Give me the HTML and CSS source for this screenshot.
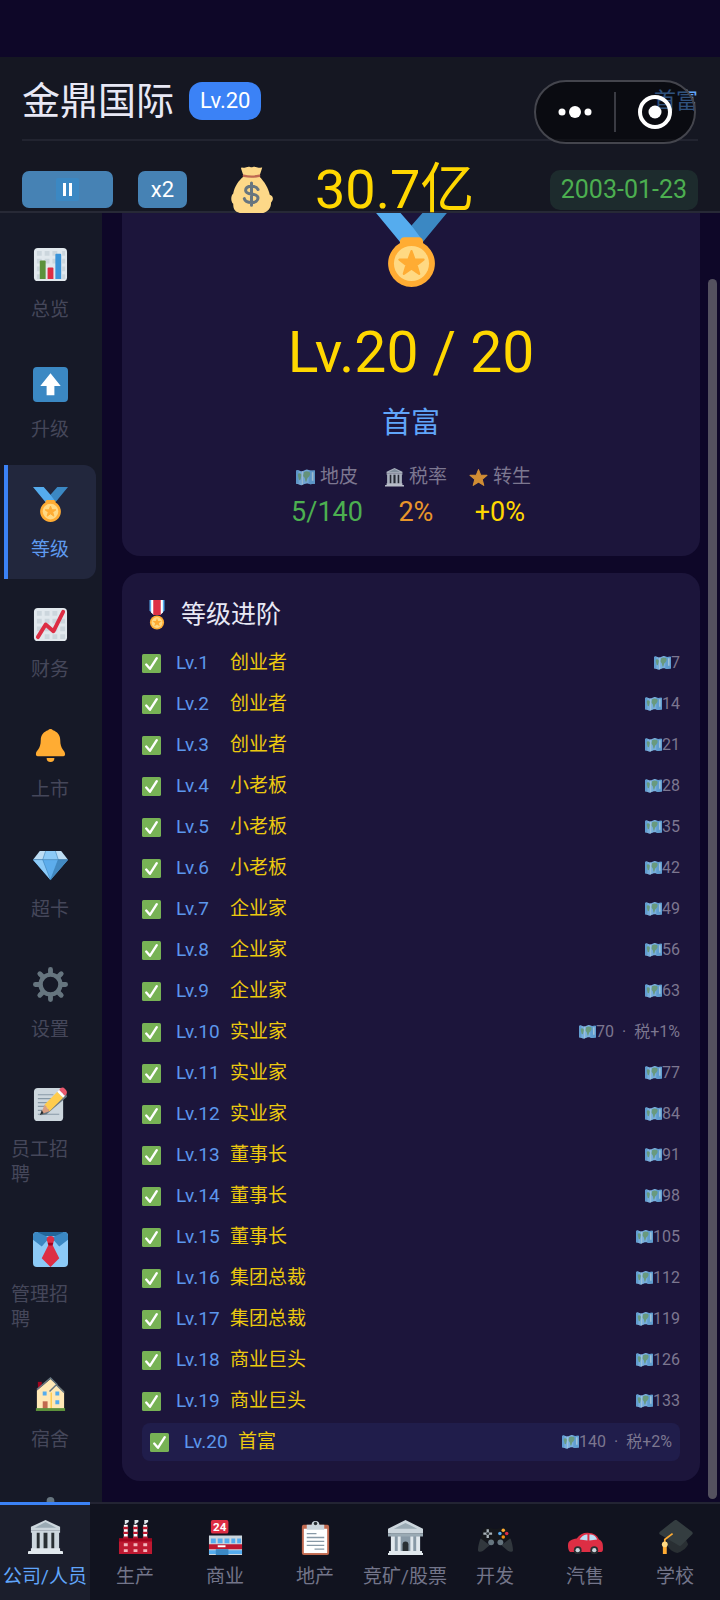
FILE: index.html
```html
<!doctype html>
<html lang="zh-CN">
<head>
    <meta charset="UTF-8">
    <meta name="viewport" content="width=device-width, initial-scale=1.0">
    <title>金鼎国际</title>
    <link rel="stylesheet" href="styles.css">
</head>
<body>

<!-- icons -->
<svg class="sprite" aria-hidden="true">
    <symbol id="medal" viewBox="0 0 36 36">
        <path fill="#55acee" d="M18 8l-7-8H0l14 17 11.5-4.75z"/>
        <path fill="#3b88c3" d="M25 0l-7 8 5.4 7.3 1.2-1.5L36 0z"/>
        <path fill="#ffac33" d="M23.2 16c.1-.2.1-.4.1-.7a2 2 0 0 0-2-2h-6.6a2 2 0 0 0-2 2c0 .3 0 .5.1.7a10.67 10.67 0 1 0 10.4 0z"/>
        <circle fill="#ffd983" cx="18" cy="25.3" r="8"/>
        <path fill="#ffac33" stroke="#ffac33" stroke-linejoin="round" d="M18 19.6l1.4 3.9h4.1l-3.2 2.5 1.2 4L18 27.6 14.5 30l1.2-4-3.2-2.5h4.1z"/>
    </symbol>
    <symbol id="medal2" viewBox="0 0 36 36">
        <path fill="#55acee" d="M9 0h18v13l-5 4h-8l-5-4z"/>
        <path fill="#fff" d="M11 0h14v15l-3 3h-8l-3-3z"/>
        <path fill="#dd2e44" d="M13.500 0h9v18h-9z"/>
        <circle fill="#ffac33" cx="18" cy="27" r="8.500"/>
        <circle fill="#ffd983" cx="18" cy="27" r="6.500"/>
        <path fill="#ffac33" d="M18 21.500l1.400 3.800h4l-3.200 2.500 1.200 4L18 29.500l-3.400 2.300 1.200-4-3.200-2.500h4z"/>
    </symbol>
    <symbol id="bars" viewBox="0 0 36 36">
        <rect fill="#e1e8ed" x="1" y="1" width="34" height="34" rx="4"/>
        <path fill="#ccd6dd" d="M4 4h5v5H4zm8 0h5v5h-5zm8 0h5v5h-5zM4 12h5v5H4zm8 0h5v5h-5zm8 0h5v5h-5zM4 20h3v5H4zm26 0h3v5h-3zM30 12h3v5h-3zM30 4h3v5h-3zM4 28h3v5H4zm26 0h3v5h-3z"/>
        <path fill="#5c913b" d="M7 15a1 1 0 0 1 1-1h4a1 1 0 0 1 1 1v18H7z"/>
        <path fill="#dd2e44" d="M15 22a1 1 0 0 1 1-1h4a1 1 0 0 1 1 1v11h-6z"/>
        <path fill="#3b94d9" d="M23 8a1 1 0 0 1 1-1h4a1 1 0 0 1 1 1v25h-6z"/>
    </symbol>
    <symbol id="up" viewBox="0 0 36 36">
        <rect fill="#3b88c3" width="36" height="36" rx="4"/>
        <path fill="#fff" d="M18 6.500L28.500 19.500H22V29h-8v-9.500H7.500z"/>
    </symbol>
    <symbol id="chart" viewBox="0 0 36 36">
        <rect fill="#e1e8ed" x="1" y="1" width="34" height="34" rx="4"/>
        <path fill="#ccd6dd" d="M4 4h5v5H4zm8 0h5v5h-5zm8 0h5v5h-5zM4 12h5v5H4zm8 0h5v5h-5zm8 0h5v5h-5zM4 20h5v5H4zm8 0h5v5h-5zm8 0h5v5h-5zm8 0h5v5h-5zM28 12h5v5h-5zM12 28h5v5h-5zm8 0h5v5h-5zm8 0h5v5h-5z"/>
        <path fill="none" stroke="#dd2e44" stroke-width="4" stroke-linecap="round" stroke-linejoin="round" d="M5 31l8-13 8 7L31 5"/>
    </symbol>
    <symbol id="bell" viewBox="0 0 36 36">
        <path fill="#ffac33" d="M28 13c0 11 5 10 5 15 0 0 0 2-2 2H5c-2 0-2-2-2-2 0-5 5-4 5-15C8 8.500 11.200 4.700 15.500 3.400a3 3 0 0 1 5 0C24.800 4.700 28 8.500 28 13z"/>
        <path fill="#ffac33" d="M14 32h8a4 4 0 0 1-8 0z"/>
    </symbol>
    <symbol id="gem" viewBox="0 0 36 36">
        <path fill="#bdddf4" d="M7 4h22l7 9H0z"/>
        <path fill="#8ccaf7" d="M13 4h10l3 9H10z"/>
        <path fill="#5dadec" d="M0 13h36L18 34z"/>
        <path fill="#8ccaf7" d="M0 13h10l8 21z"/>
        <path fill="#4289c1" d="M26 13h10L18 34z"/>
        <path fill="none" stroke="#3b7fb5" stroke-width=".6" d="M0 13h36M13 4l-3 9 8 21 8-21-3-9"/>
    </symbol>
    <symbol id="gear" viewBox="0 0 36 36">
        <g stroke="#66757f" stroke-width="5" stroke-linecap="round">
            <path d="M18 2.500v31M2.500 18h31M7 7l22 22M29 7L7 29"/>
        </g>
        <circle fill="#161927" stroke="#66757f" stroke-width="4.500" cx="18" cy="18" r="10.200"/>
    </symbol>
    <symbol id="memo" viewBox="0 0 36 36">
        <rect fill="#ccd6dd" x="1" y="1" width="30" height="34" rx="4"/>
        <path stroke="#8899a6" stroke-width="1.200" d="M5 8h16M5 12h16M5 16h14M5 20h12M5 24h10M5 28h22"/>
        <path fill="#66757f" d="M8 29l26-23 1 4-21 18z"/>
        <path fill="#ffcc4d" d="M12 18L25 5l6 6-14 14z"/>
        <path fill="#fff" d="M25 5l2-2 6 6-2 2z"/>
        <path fill="#ea596e" d="M27 3c2-3 4-3 6-1s3 4 0 7z"/>
        <path fill="#d99e82" d="M12 18l5 7-9 3z"/>
        <path fill="#292f33" d="M9 24l2 3-4 2z"/>
    </symbol>
    <symbol id="tie" viewBox="0 0 36 36">
        <rect fill="#8ccaf7" width="36" height="36" rx="4"/>
        <path fill="#226699" d="M4 0h28l-5 4H9z"/>
        <path fill="#3b88c3" d="M0 4c0-3 2-4 4-4l13 6-8 9-9-7zM36 4c0-3-2-4-4-4L19 6l8 9 9-7z"/>
        <path fill="#dd2e44" d="M18 4c3 0 4 2 4 4l-2 5 7 14-9 9-9-9 7-14-2-5c0-2 1-4 4-4z"/>
        <path fill="#a0041e" d="M15 11h6l-1 3h-4z"/>
    </symbol>
    <symbol id="house" viewBox="0 0 36 36">
        <path fill="#a0041e" d="M5 5h4v9H5z"/>
        <path fill="#ffe8b6" d="M4 14L18 2l9 8 5 5v18H4z"/>
        <path fill="none" stroke="#66757f" stroke-width="1.500" d="M4 13L18 1l7 7M17 15l7-7 8 8"/>
        <path fill="#ffcc4d" d="M18 16h1.500v17H18z"/>
        <path fill="#55acee" d="M10 15h4v4h-4zm13 0h4v4h-4zm0 9h4v4h-4z"/>
        <path fill="#c1694f" d="M10 25h5v8h-5z"/>
        <path fill="#5c913b" d="M3 32h30v3H3z"/>
    </symbol>
    <symbol id="person" viewBox="0 0 36 36">
        <circle fill="#66757f" cx="18" cy="4" r="4"/>
        <path fill="#66757f" d="M6 34c0-14 4-20 12-20s12 6 12 20z"/>
    </symbol>
    <symbol id="temple" viewBox="0 0 36 36">
        <path fill="#ccd6dd" d="M18 0l15 7v4H3V7z"/>
        <path fill="#9aaab4" d="M18 2l11 6H7z"/>
        <path fill="#292f33" d="M5 12h26v18H5z"/>
        <path fill="#ccd6dd" d="M3 11h30v2H3zM4 12h5v18H4zm8 0h4v18h-4zm8 0h4v18h-4zm7 0h5v18h-5z"/>
        <path fill="#e1e8ed" d="M3 29h30v3H3zM1 32h34a1 1 0 0 1 1 1v2H0v-2a1 1 0 0 1 1-1z"/>
    </symbol>
    <symbol id="factory" viewBox="0 0 36 36">
        <path stroke="#fff" stroke-width="4" d="M8 5v14M18 5v14M28 5v14"/>
        <path stroke="#be1931" stroke-width="5" stroke-dasharray="2.500" d="M8 7v13M18 7v13M28 7v13"/>
        <path fill="#e1e8ed" d="M7 0h4v2L8 4H7zm10 0h4v2l-3 2h-1zm10 0h4v2l-3 2h-1z"/>
        <path fill="#be1931" d="M1 19h34v16H1z"/>
        <path fill="#a0041e" d="M1 19h34v3H1z"/>
        <path fill="#f4b6bd" d="M6 24h4v3H6zm10 0h4v3h-4zm10 0h4v3h-4zM6 30h4v3H6zm10 0h4v3h-4zm10 0h4v3h-4z"/>
    </symbol>
    <symbol id="board" viewBox="0 0 36 36">
        <rect fill="#c1694f" x="4" y="5" width="28" height="31" rx="2"/>
        <path fill="#fff" d="M6 9h24v25H6z"/>
        <path fill="#ccd6dd" d="M9 5h5a4 4 0 0 1 8 0h5v5H9z"/>
        <circle fill="#292f33" cx="18" cy="3.500" r="1.800"/>
        <path stroke="#8899a6" stroke-width="1.300" d="M9 14h10M9 18h18M9 22h18M9 26h18M17 30h10"/>
    </symbol>
    <symbol id="bank" viewBox="0 0 36 36">
        <path fill="#8899a6" d="M3 14h30v18H3z"/>
        <path fill="#ccd6dd" d="M18 0l18 9v5H0V9z"/>
        <path fill="#9aaab4" d="M18 3l12 6H6zM0 14h36v3H0z"/>
        <path fill="#e1e8ed" d="M3 17h4v16H3zm7 0h3v16h-3zm13 0h3v16h-3zm6 0h4v16h-4z"/>
        <path fill="#292f33" d="M15 32v-7a3 3 0 0 1 6 0v7z"/>
        <path fill="#e1e8ed" d="M1 32h34v2h1v2H0v-2h1z"/>
    </symbol>
    <symbol id="pad" viewBox="0 0 36 36">
        <path fill="#15171c" d="M5 10c5-4 9-1 13-1s8-3 13 1l3 12H2z"/>
        <path fill="#31373d" d="M3 19l9 7-7 6c-2 1-5 1-5-1 0-4 2-12 3-12zM33 19l-9 7 7 6c2 1 5 1 5-1 0-4-2-12-3-12z"/>
        <path stroke="#aab4ba" stroke-width="2.400" d="M10 9.500v9M5.500 14h9"/>
        <circle fill="#292f33" cx="10" cy="14" r="1.500"/>
        <circle fill="#66757f" cx="13.500" cy="23" r="3"/>
        <circle fill="#66757f" cx="23" cy="23" r="3"/>
        <circle fill="#ffac33" cx="26" cy="10.500" r="1.800"/>
        <circle fill="#dd2e44" cx="29.500" cy="14" r="1.800"/>
        <circle fill="#55acee" cx="22.500" cy="14" r="1.800"/>
        <circle fill="#f4900c" cx="26" cy="17.500" r="1.800"/>
    </symbol>
    <symbol id="car" viewBox="0 0 36 36">
        <path fill="#dd2e44" d="M0 26c0-5 4-6 9-7 3-4 6-6 11-6 7 0 10 3 12 7 4 2 4 5 4 10 0 2-1 3-3 3H3c-2 0-3-3-3-7z"/>
        <path fill="#bdddf4" d="M12 20c3-4 5-5 8-5v6zM22 15c4 0 6 1 8 5l-8 1z"/>
        <circle fill="#292f33" cx="10" cy="31" r="4"/>
        <circle fill="#292f33" cx="27" cy="31" r="4"/>
        <circle fill="#ccd6dd" cx="10" cy="31" r="2.200"/>
        <circle fill="#ccd6dd" cx="27" cy="31" r="2.200"/>
    </symbol>
    <symbol id="cap" viewBox="0 0 36 36">
        <path fill="#292f33" d="M8 16l20 3 3 6c-2 5-8 8-11 9-4-1-8-3-10-7z"/>
        <path fill="#343d40" d="M19 0l16 12c1 1 1 2 0 3L24 26c-1 1-2 1-3 0L2 15c-1-1-1-2 0-3L16 1c1-1 2-1 3-1z"/>
        <path fill="none" stroke="#ffac33" stroke-width="1.800" d="M15 14l-8 6v6"/>
        <path fill="#ffac33" d="M5 25h4v10H5z"/>
        <circle fill="#ffd983" cx="7" cy="25" r="3"/>
    </symbol>
    <symbol id="bag" viewBox="0 0 36 36">
        <path fill="#fdd888" d="M10 2c0-2 2 0 4-1s3 0 4 0 2-1 4 0 5-1 4 1l-2 6c4 4 7 9 8 14 3 1 3 4 1 6 0 5-3 7-6 8H9c-4-1-5-3-5-7-2-2-2-6 0-8 1-5 4-10 8-13z"/>
        <path fill="#bf6952" d="M12 6.500c4 1 8 1 12 0 1 0 1 1.800 0 2-4 .7-8 .7-12 0-1-.2-1-2 0-2z"/>
        <path fill="none" stroke="#67757f" stroke-width="2.300" stroke-linecap="round" d="M18 13v17M23 18c-1-2-3-2.500-5-2.500-3 0-4.500 1.500-4.500 3.200C13.500 23 23 20 23 24.500c0 2-2 3.500-5 3.500s-5-1-5.500-3"/>
    </symbol>
    <symbol id="check" viewBox="0 0 36 36">
        <rect fill="#77b255" width="36" height="36" rx="3"/>
        <path fill="none" stroke="#fff" stroke-width="4.500" stroke-linecap="round" stroke-linejoin="round" d="M8 20l7 8L28 8"/>
    </symbol>
    <symbol id="map" viewBox="0 0 36 30">
        <path fill="#88c9f9" d="M0 2c6-3 8 2 12 1s8-5 12-2 8 0 12 1v25c-4-1-8 2-12 0s-8 0-12 2-8-3-12-2z"/>
        <path fill="#6db6ea" d="M0 2c3-1 3-1 5-.5V26c-2 0-3-.5-5 1zM24 1c4 2 8 0 12 1v25c-4-1-8 2-12 0z"/>
        <path fill="#77b28a" d="M15 5c4-3 8-2 11 0 2 3 0 7-2 9-4 2-3 9-5 9s-1-7-4-9 0-6 0-9zM5 7c3-1 6 1 5 5s-1 8-3 8-2-4-3-7 0-5 1-6z"/>
        <path fill="#bfe5f5" d="M11 3h2v25l-2 1zM30 5h3v16h-3z"/>
    </symbol>
    <symbol id="star" viewBox="0 0 36 36">
        <path fill="#ffac33" stroke="#ffac33" stroke-width="2" stroke-linejoin="round" d="M18 3l4.200 10.500L34 14l-9 7.500L28 33l-10-6.500L8 33l3-11.500L2 14l11.800-.5z"/>
    </symbol>
</svg>

<header class="header">
    <div class="title-row">
        <h1>金鼎国际</h1>
        <span class="badge">Lv.20</span>
        <span class="rank">首富</span>
    </div>
    <div class="status-row">
        <button class="btn pause" aria-label="暂停"><span class="pause-icon"></span></button>
        <button class="btn speed">x2</button>
        <div class="money">
            <svg class="bag"><use href="#bag"/></svg>
            <span>30.7亿</span>
        </div>
        <span class="date">2003-01-23</span>
    </div>
    <div class="capsule">
        <button aria-label="更多"><svg width="34" height="14"><circle cx="4" cy="7" r="3.500"/><circle cx="17" cy="7" r="6"/><circle cx="30" cy="7" r="3.500"/></svg></button>
        <button aria-label="关闭"><svg width="34" height="34"><circle class="ring" cx="17" cy="17" r="15"/><circle cx="17" cy="17" r="6.500"/></svg></button>
    </div>
</header>

<div class="content">
    <nav class="side">
        <a href="#"><svg><use href="#bars"/></svg><span>总览</span></a>
        <a href="#"><svg><use href="#up"/></svg><span>升级</span></a>
        <a href="#" class="active"><svg><use href="#medal"/></svg><span>等级</span></a>
        <a href="#"><svg><use href="#chart"/></svg><span>财务</span></a>
        <a href="#"><svg><use href="#bell"/></svg><span>上市</span></a>
        <a href="#"><svg><use href="#gem"/></svg><span>超卡</span></a>
        <a href="#"><svg><use href="#gear"/></svg><span>设置</span></a>
        <a href="#"><svg><use href="#memo"/></svg><span class="long">员工招聘</span></a>
        <a href="#"><svg><use href="#tie"/></svg><span class="long">管理招聘</span></a>
        <a href="#"><svg><use href="#house"/></svg><span>宿舍</span></a>
        <a href="#" aria-label="人员"><svg><use href="#person"/></svg></a>
    </nav>

    <main class="main">
        <section class="card hero">
            <svg class="hero-medal"><use href="#medal"/></svg>
            <div class="hero-level">Lv.20 / 20</div>
            <div class="hero-name">首富</div>
            <dl class="stats">
                <div><dt><svg><use href="#map"/></svg>地皮</dt><dd class="green">5/140</dd></div>
                <div><dt><svg><use href="#temple"/></svg>税率</dt><dd class="orange">2%</dd></div>
                <div><dt><svg><use href="#star"/></svg>转生</dt><dd class="gold">+0%</dd></div>
            </dl>
        </section>

        <section class="card levels">
            <h2><svg><use href="#medal2"/></svg>等级进阶</h2>
            <ul>
                <li><svg class="check"><use href="#check"/></svg><span class="lv">Lv.1</span><span class="name">创业者</span><span class="land"><svg><use href="#map"/></svg>7</span></li>
                <li><svg class="check"><use href="#check"/></svg><span class="lv">Lv.2</span><span class="name">创业者</span><span class="land"><svg><use href="#map"/></svg>14</span></li>
                <li><svg class="check"><use href="#check"/></svg><span class="lv">Lv.3</span><span class="name">创业者</span><span class="land"><svg><use href="#map"/></svg>21</span></li>
                <li><svg class="check"><use href="#check"/></svg><span class="lv">Lv.4</span><span class="name">小老板</span><span class="land"><svg><use href="#map"/></svg>28</span></li>
                <li><svg class="check"><use href="#check"/></svg><span class="lv">Lv.5</span><span class="name">小老板</span><span class="land"><svg><use href="#map"/></svg>35</span></li>
                <li><svg class="check"><use href="#check"/></svg><span class="lv">Lv.6</span><span class="name">小老板</span><span class="land"><svg><use href="#map"/></svg>42</span></li>
                <li><svg class="check"><use href="#check"/></svg><span class="lv">Lv.7</span><span class="name">企业家</span><span class="land"><svg><use href="#map"/></svg>49</span></li>
                <li><svg class="check"><use href="#check"/></svg><span class="lv">Lv.8</span><span class="name">企业家</span><span class="land"><svg><use href="#map"/></svg>56</span></li>
                <li><svg class="check"><use href="#check"/></svg><span class="lv">Lv.9</span><span class="name">企业家</span><span class="land"><svg><use href="#map"/></svg>63</span></li>
                <li><svg class="check"><use href="#check"/></svg><span class="lv">Lv.10</span><span class="name">实业家</span><span class="land"><svg><use href="#map"/></svg>70<i>·</i>税+1%</span></li>
                <li><svg class="check"><use href="#check"/></svg><span class="lv">Lv.11</span><span class="name">实业家</span><span class="land"><svg><use href="#map"/></svg>77</span></li>
                <li><svg class="check"><use href="#check"/></svg><span class="lv">Lv.12</span><span class="name">实业家</span><span class="land"><svg><use href="#map"/></svg>84</span></li>
                <li><svg class="check"><use href="#check"/></svg><span class="lv">Lv.13</span><span class="name">董事长</span><span class="land"><svg><use href="#map"/></svg>91</span></li>
                <li><svg class="check"><use href="#check"/></svg><span class="lv">Lv.14</span><span class="name">董事长</span><span class="land"><svg><use href="#map"/></svg>98</span></li>
                <li><svg class="check"><use href="#check"/></svg><span class="lv">Lv.15</span><span class="name">董事长</span><span class="land"><svg><use href="#map"/></svg>105</span></li>
                <li><svg class="check"><use href="#check"/></svg><span class="lv">Lv.16</span><span class="name">集团总裁</span><span class="land"><svg><use href="#map"/></svg>112</span></li>
                <li><svg class="check"><use href="#check"/></svg><span class="lv">Lv.17</span><span class="name">集团总裁</span><span class="land"><svg><use href="#map"/></svg>119</span></li>
                <li><svg class="check"><use href="#check"/></svg><span class="lv">Lv.18</span><span class="name">商业巨头</span><span class="land"><svg><use href="#map"/></svg>126</span></li>
                <li><svg class="check"><use href="#check"/></svg><span class="lv">Lv.19</span><span class="name">商业巨头</span><span class="land"><svg><use href="#map"/></svg>133</span></li>
                <li class="current"><svg class="check"><use href="#check"/></svg><span class="lv">Lv.20</span><span class="name">首富</span><span class="land"><svg><use href="#map"/></svg>140<i>·</i>税+2%</span></li>
            </ul>
        </section>
    </main>
    <div class="scrollbar"></div>
</div>

<nav class="tabs">
    <a href="#" class="active"><svg><use href="#temple"/></svg>公司/人员</a>
    <a href="#"><svg><use href="#factory"/></svg>生产</a>
    <a href="#">
        <svg viewBox="0 0 36 36">
            <rect fill="#dd2e44" x="3" width="18" height="14" rx="2"/>
            <text class="store-text" x="12" y="11.500">24</text>
            <path fill="#ccd6dd" d="M1 16h34v20H1z"/>
            <path fill="#55acee" d="M3 19h5v5H3zm7 0h5v5h-5zm7 0h5v5h-5zm7 0h4v5h-4zm6 0h4v5h-4zM1 31h34v4H1z"/>
            <path fill="#be1931" d="M1 25h34v5H1z"/>
            <path fill="#3b88c3" d="M8 30h13v6H8z"/>
            <path fill="#fff" d="M10 26h8v2h-8z"/>
        </svg>商业</a>
    <a href="#"><svg><use href="#board"/></svg>地产</a>
    <a href="#"><svg><use href="#bank"/></svg>竞矿/股票</a>
    <a href="#"><svg><use href="#pad"/></svg>开发</a>
    <a href="#"><svg><use href="#car"/></svg>汽售</a>
    <a href="#"><svg><use href="#cap"/></svg>学校</a>
</nav>

</body>
</html>
```
FILE: styles.css
```css
* {
    box-sizing: border-box;
}
body {
    margin: 0;
    height: 100vh;
    padding-top: 57px;
    display: flex;
    flex-direction: column;
    overflow: hidden;
    background: #0e0728;
    color: #e8e8f5;
    font-family: Roboto, "Noto Sans CJK SC", sans-serif;
    font-size: 19px;
    line-height: 24px;
}
h1, h2, ul, dl, dd {
    margin: 0;
    padding: 0;
    font-weight: inherit;
}
a {
    color: inherit;
    text-decoration: none;
}
button {
    border: 0;
    padding: 0;
    font: inherit;
    color: #fff;
    background: none;
}
svg {
    flex: none;
}
.sprite {
    position: absolute;
    width: 0;
    height: 0;
}
.store-text {
    font-size: 12px;
    font-weight: bold;
    fill: #fff;
    text-anchor: middle;
}

/* header */
.header {
    position: relative;
    flex: none;
    padding: 5px 22px 0;
    background: #151722;
    border-bottom: 2px solid #272936;
}
.title-row {
    display: flex;
    align-items: center;
    height: 79px;
    border-bottom: 2px solid #222430;
}
h1 {
    font-size: 38px;
    line-height: 48px;
}
.badge {
    margin-left: 15px;
    padding: 0 11px;
    border-radius: 13px;
    background: #3b82f6;
    color: #fff;
    font-size: 22px;
    line-height: 38px;
}
.rank {
    margin-left: auto;
    color: #60a5fa;
    font-size: 22px;
}
.status-row {
    display: flex;
    align-items: center;
    height: 49px;
    margin: 24px 0 -3px;
}
.btn {
    height: 37px;
    border-radius: 7px;
    background: #4682b4;
    font-size: 22px;
}
.pause {
    display: flex;
    align-items: center;
    justify-content: center;
    width: 91px;
}
.pause-icon {
    width: 23px;
    height: 23px;
    padding: 5px 7px;
    border-radius: 2px;
    background: #3b88c3;
}
.pause-icon::before {
    content: "";
    display: block;
    height: 13px;
    border: solid #fff;
    border-width: 0 3px;
}
.speed {
    width: 49px;
    margin-left: 25px;
}
.money {
    display: flex;
    align-items: center;
    gap: 40px;
    margin-left: 41px;
    color: #ffd700;
    font-size: 54px;
}
.bag {
    width: 47px;
    height: 47px;
}
.date {
    margin-left: auto;
    padding: 0 11px;
    border-radius: 10px;
    background: #1d2b2d;
    color: #4caf50;
    font-size: 25px;
    line-height: 40px;
}
.capsule {
    position: absolute;
    top: 23px;
    right: 24px;
    display: flex;
    width: 162px;
    height: 64px;
    padding: 10px 0;
    border: 2px solid #44454d;
    border-radius: 32px;
    background: rgba(0, 0, 0, 0.5);
}
.capsule button {
    display: flex;
    flex: 1;
    align-items: center;
    justify-content: center;
}
.capsule button + button {
    border-left: 2px solid #3a3b43;
}
.capsule svg {
    fill: #fff;
}
.capsule .ring {
    fill: none;
    stroke: #fff;
    stroke-width: 4;
}

.content {
    position: relative;
    display: flex;
    flex: 1;
    min-height: 0;
    overflow: hidden;
}

/* left menu */
.side {
    display: flex;
    flex: none;
    flex-direction: column;
    gap: 6px;
    width: 102px;
    padding: 12px 6px 0 4px;
    background: #161927;
    color: #45475a;
    line-height: 25px;
}
.side a {
    display: flex;
    flex: none;
    flex-direction: column;
    align-items: center;
    gap: 15px;
    padding: 22px 4px 17px 0;
    border-left: 4px solid transparent;
    border-radius: 0 12px 12px 0;
}
.side svg {
    width: 35px;
    height: 35px;
}
.side .long {
    width: 78px;
    padding-right: 8px;
}
.side .active {
    border-color: #3b82f6;
    background: #22273d;
    color: #5f9bf0;
}

/* cards */
.main {
    flex: 1;
    min-width: 0;
    padding: 0 20px;
}
.card {
    border-radius: 18px;
    background: #1c153b;
}
.hero {
    display: flex;
    flex-direction: column;
    align-items: center;
    margin: -40px 0 17px;
    padding: 35px 20px 28px;
}
.hero-medal {
    width: 79px;
    height: 79px;
}
.hero-level {
    margin-top: 34px;
    color: #ffd700;
    font-size: 57px;
    line-height: 64px;
}
.hero-name {
    margin: 18px 0 22px;
    color: #60a5fa;
    font-size: 29px;
    line-height: 40px;
}
.stats {
    display: flex;
    gap: 22px;
    text-align: center;
}
.stats dt {
    display: flex;
    align-items: center;
    justify-content: center;
    gap: 5px;
    color: #7c7790;
}
.stats svg {
    width: 19px;
    height: 19px;
    opacity: 0.8;
}
.stats dd {
    margin-top: 7px;
    font-size: 27px;
    line-height: 32px;
}
.green {
    color: #4caf50;
}
.orange {
    color: #e8962a;
}
.gold {
    color: #ffd700;
}

.levels {
    padding: 24px 20px 20px;
}
h2 {
    display: flex;
    align-items: center;
    gap: 9px;
    margin-bottom: 11px;
    font-size: 25px;
    line-height: 36px;
}
h2 svg {
    width: 30px;
    height: 30px;
}
ul {
    display: flex;
    flex-direction: column;
    gap: 3px;
    list-style: none;
}
li {
    display: flex;
    align-items: center;
    height: 38px;
}
.current {
    padding: 0 8px;
    border-radius: 8px;
    background: #201d4b;
}
.check {
    width: 19px;
    height: 19px;
    margin-right: 15px;
}
.lv {
    width: 54px;
    color: #5c97ec;
}
.name {
    color: #ecc90f;
}
.land {
    display: flex;
    align-items: center;
    margin-left: auto;
    color: #7c7790;
    font-size: 16px;
}
.land svg {
    width: 17px;
    height: 14px;
    opacity: 0.85;
}
.land i {
    margin: 0 8px;
    font-style: normal;
}

.scrollbar {
    position: absolute;
    top: 66px;
    right: 3px;
    bottom: 3px;
    width: 9px;
    border-radius: 5px;
    background: #54515f;
}

/* bottom tabs */
.tabs {
    display: flex;
    flex: none;
    background: #11131f;
    color: #73758a;
    box-shadow: inset 0 2px #232433;
}
.tabs a {
    display: flex;
    flex: 1 1 0;
    flex-direction: column;
    align-items: center;
    gap: 10px;
    min-width: 0;
    padding: 15px 0 11px;
    border-top: 3px solid transparent;
    white-space: nowrap;
}
.tabs svg {
    width: 35px;
    height: 35px;
}
.tabs .active {
    border-color: #3b82f6;
    background: #1b1e2c;
    color: #60a5fa;
}
```
